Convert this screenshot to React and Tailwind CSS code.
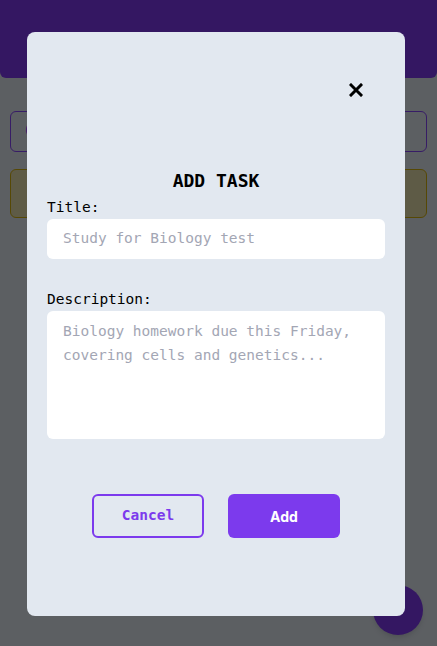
export default function App() {
  return (
    <div className="relative w-[437px] h-[646px] overflow-hidden bg-[#e6edf5] font-['DejaVu_Sans_Mono',monospace]">
      {/* underlying page */}
      <div className="h-[78px] bg-[#823af5] rounded-b-md" />
      <div className="px-[10px] pt-[33px] flex flex-col gap-[17px]">
        <div className="h-[41px] rounded-md border border-[#8b46ff] flex items-center px-[14px] text-[#8b46ff] text-[15px]">
          Create a new task
        </div>
        <div className="h-[49px] rounded-md border border-[#d8b40c] bg-[#ece4b0]" />
      </div>
      <div className="absolute right-[14px] bottom-[11px] w-[50px] h-[50px] rounded-full bg-[#823af5] shadow-md" />

      {/* overlay */}
      <div className="absolute inset-0 bg-black/60">
        <div className="absolute left-[27px] top-[32px] w-[378px] h-[584px] rounded-lg bg-[#e2e8f0] px-[20px] pt-[135px]">
          <button className="absolute right-[42px] top-[51px] w-[14px] h-[14px] flex items-center justify-center">
            <svg width="14" height="14" viewBox="0 0 14 14">
              <path d="M2 2 L12 12 M12 2 L2 12" stroke="#000" strokeWidth="3" strokeLinecap="square" />
            </svg>
          </button>
          <h2 className="text-center font-bold text-[18px] leading-[28px] text-black">ADD TASK</h2>
          <label className="block text-[14.5px] leading-[20px] text-black mt-[2px]">Title:</label>
          <div className="mt-[2px] h-[40px] rounded-md bg-white flex items-center px-[16px] text-[14.5px] text-[#a3a6b4]">
            Study for Biology test
          </div>
          <label className="block text-[14.5px] leading-[20px] text-black mt-[30px]">Description:</label>
          <div className="mt-[2px] h-[128px] rounded-md bg-white px-[16px] pt-[8px] text-[14.5px] leading-[24px] text-[#a3a6b4]">
            Biology homework due this Friday,<br />covering cells and genetics...
          </div>
          <div className="mt-[55px] flex justify-center gap-[24px]">
            <button className="w-[112px] h-[44px] rounded-md border-2 border-[#7c3aed] text-[#7c3aed] font-bold text-[14.5px]">
              Cancel
            </button>
            <button className="w-[112px] h-[44px] rounded-md bg-[#7c3aed] text-white font-bold text-[14px] font-['Inter',sans-serif]">
              Add
            </button>
          </div>
        </div>
      </div>
    </div>
  );
}
